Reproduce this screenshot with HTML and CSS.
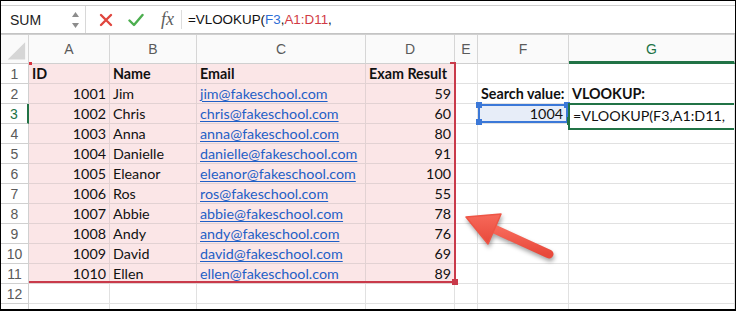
FILE: index.html
```html
<!DOCTYPE html>
<html lang="en">
<head>
    <meta charset="UTF-8">
    <meta name="viewport" content="width=device-width, initial-scale=1.0">
    <title>VLOOKUP</title>
    <link rel="stylesheet" href="styles.css">
</head>
<body>
    <div class="frame">
        <div class="toolbar">
            <div class="namebox">
                <span>SUM</span>
                <svg class="spin" width="9" height="18" viewBox="0 0 9 18">
                    <path d="M1 6 L4.5 1 L8 6 Z" fill="#8c8c8c"/>
                    <path d="M1 12 L4.5 17 L8 12 Z" fill="#8c8c8c"/>
                </svg>
            </div>
            <div class="actions">
                <svg width="14" height="14" viewBox="0 0 14 14">
                    <path d="M2 2 L12 12 M12 2 L2 12" stroke="#e0463e" stroke-width="2.4" stroke-linecap="round"/>
                </svg>
                <svg width="16" height="14" viewBox="0 0 16 14">
                    <path d="M1.5 7.5 L6 12 L14.5 2" stroke="#4cae4f" stroke-width="2.4" fill="none" stroke-linecap="round" stroke-linejoin="round"/>
                </svg>
                <span class="fx">fx</span>
            </div>
            <div class="formula">=VLOOKUP(<span class="ref-f">F3</span>,<span class="ref-a">A1:D11</span>,</div>
        </div>

        <div class="sheet">
            <div class="corner">
                <svg width="28" height="28" viewBox="0 0 28 28"><path d="M7 25 L25 25 L25 7 Z" fill="#d6d6d6"/></svg>
            </div>
            <div class="colhead">A</div>
            <div class="colhead">B</div>
            <div class="colhead">C</div>
            <div class="colhead">D</div>
            <div class="colhead">E</div>
            <div class="colhead">F</div>
            <div class="colhead active">G</div>

            <div class="rowhead">1</div>
            <div class="cell hl b">ID</div>
            <div class="cell hl b">Name</div>
            <div class="cell hl b">Email</div>
            <div class="cell hl b">Exam Result</div>
            <div class="cell"></div>
            <div class="cell"></div>
            <div class="cell"></div>

            <div class="rowhead">2</div>
            <div class="cell hl num">1001</div>
            <div class="cell hl">Jim</div>
            <div class="cell hl"><span class="link">jim@fakeschool.com</span></div>
            <div class="cell hl num">59</div>
            <div class="cell"></div>
            <div class="cell b">Search value:</div>
            <div class="cell b">VLOOKUP:</div>

            <div class="rowhead active">3</div>
            <div class="cell hl num">1002</div>
            <div class="cell hl">Chris</div>
            <div class="cell hl"><span class="link">chris@fakeschool.com</span></div>
            <div class="cell hl num">60</div>
            <div class="cell"></div>
            <div class="cell num sel">
                1004
                <span class="knob tl"></span>
                <span class="knob tr"></span>
                <span class="knob bl"></span>
                <span class="knob br"></span>
            </div>
            <div class="cell edit-host">
                <div class="editor">=VLOOKUP(F3,A1:D11,</div>
            </div>

            <div class="rowhead">4</div>
            <div class="cell hl num">1003</div>
            <div class="cell hl">Anna</div>
            <div class="cell hl"><span class="link">anna@fakeschool.com</span></div>
            <div class="cell hl num">80</div>
            <div class="cell"></div>
            <div class="cell"></div>
            <div class="cell"></div>

            <div class="rowhead">5</div>
            <div class="cell hl num">1004</div>
            <div class="cell hl">Danielle</div>
            <div class="cell hl"><span class="link">danielle@fakeschool.com</span></div>
            <div class="cell hl num">91</div>
            <div class="cell"></div>
            <div class="cell"></div>
            <div class="cell"></div>

            <div class="rowhead">6</div>
            <div class="cell hl num">1005</div>
            <div class="cell hl">Eleanor</div>
            <div class="cell hl"><span class="link">eleanor@fakeschool.com</span></div>
            <div class="cell hl num">100</div>
            <div class="cell"></div>
            <div class="cell"></div>
            <div class="cell"></div>

            <div class="rowhead">7</div>
            <div class="cell hl num">1006</div>
            <div class="cell hl">Ros</div>
            <div class="cell hl"><span class="link">ros@fakeschool.com</span></div>
            <div class="cell hl num">55</div>
            <div class="cell"></div>
            <div class="cell"></div>
            <div class="cell"></div>

            <div class="rowhead">8</div>
            <div class="cell hl num">1007</div>
            <div class="cell hl">Abbie</div>
            <div class="cell hl"><span class="link">abbie@fakeschool.com</span></div>
            <div class="cell hl num">78</div>
            <div class="cell"></div>
            <div class="cell"></div>
            <div class="cell"></div>

            <div class="rowhead">9</div>
            <div class="cell hl num">1008</div>
            <div class="cell hl">Andy</div>
            <div class="cell hl"><span class="link">andy@fakeschool.com</span></div>
            <div class="cell hl num">76</div>
            <div class="cell"></div>
            <div class="cell"></div>
            <div class="cell"></div>

            <div class="rowhead">10</div>
            <div class="cell hl num">1009</div>
            <div class="cell hl">David</div>
            <div class="cell hl"><span class="link">david@fakeschool.com</span></div>
            <div class="cell hl num">69</div>
            <div class="cell"></div>
            <div class="cell"></div>
            <div class="cell"></div>

            <div class="rowhead">11</div>
            <div class="cell hl num">1010</div>
            <div class="cell hl">Ellen</div>
            <div class="cell hl"><span class="link">ellen@fakeschool.com</span></div>
            <div class="cell hl num">89</div>
            <div class="cell"></div>
            <div class="cell"></div>
            <div class="cell"></div>

            <div class="rowhead">12</div>
            <div class="cell"></div>
            <div class="cell"></div>
            <div class="cell"></div>
            <div class="cell"></div>
            <div class="cell"></div>
            <div class="cell"></div>
            <div class="cell"></div>

            <div class="rowhead">13</div>
            <div class="cell"></div>
            <div class="cell"></div>
            <div class="cell"></div>
            <div class="cell"></div>
            <div class="cell"></div>
            <div class="cell"></div>
            <div class="cell"></div>
        </div>

        <!-- reference range A1:D11 -->
        <div class="range">
            <span class="tick-tl"></span>
            <span class="tick-tr"></span>
            <span class="handle"></span>
        </div>

        <svg class="arrow" width="200" height="100" viewBox="0 0 200 100">
            <defs>
                <linearGradient id="ag" x1="0" y1="0" x2="0" y2="1">
                    <stop offset="0" stop-color="#f7695a"/>
                    <stop offset="1" stop-color="#e8493b"/>
                </linearGradient>
            </defs>
            <line x1="92" y1="48" x2="149" y2="74" stroke="url(#ag)" stroke-width="9" stroke-linecap="round"/>
            <path d="M66 37 L101 34 L88 64 Z" fill="url(#ag)" stroke="#ee5545" stroke-width="1.5" stroke-linejoin="round"/>
        </svg>
    </div>
</body>
</html>
```

FILE: styles.css
```css
body {
    margin: 0;
    background-color: #ffffff;
}

.frame {
    position: relative;
    width: 736px;
    height: 311px;
    box-sizing: border-box;
    border: 1px solid #000;
    border-bottom-width: 2px;
    overflow: hidden;
    background-color: #fff;
}

/* formula bar */

.toolbar {
    display: flex;
    align-items: center;
    height: 27px;
    margin-top: 4px;
    border-top: 1px solid #cfcfcf;
    border-bottom: 1px solid #c4c4c4;
    font-family: "Liberation Sans", Arial, sans-serif;
    font-size: 14px;
    color: #222;
}

.namebox {
    display: flex;
    align-items: center;
    justify-content: space-between;
    width: 85px;
    height: 100%;
    box-sizing: border-box;
    padding: 0 5px 0 9px;
    border-right: 1px solid #d8d8d8;
}

.actions {
    display: flex;
    align-items: center;
    gap: 15px;
    height: 19px;
    padding: 0 7px 0 13px;
    border-right: 1px solid #dddddd;
}

.fx {
    font-family: "Liberation Serif", serif;
    font-style: italic;
    font-size: 18px;
    color: #5c5c5c;
    margin-left: 2px;
}

.formula {
    padding-left: 6px;
    font-family: "Liberation Sans Narrow", "Liberation Sans", sans-serif;
    font-size: 13.4px;
    color: #111;
}

.ref-f {
    color: #2f6fd6;
}

.ref-a {
    color: #d13a45;
}

/* grid */

.sheet {
    display: grid;
    grid-template-columns: 28px 81px 87px 169px 89px 23px 91px 1fr;
    grid-template-rows: 29px;
    grid-auto-rows: 20px;
    border-top: 1px solid #d0d0d0;
    font-family: Lato, sans-serif;
    font-size: 14.3px;
    color: #111;
}

.corner,
.colhead,
.rowhead {
    background-color: #fafafa;
    color: #5a5a5a;
    font-family: "Liberation Sans", Arial, sans-serif;
    font-size: 14px;
    display: flex;
    align-items: center;
    justify-content: center;
    border-right: 1px solid #d6d6d6;
    border-bottom: 1px solid #d0d0d0;
    box-sizing: border-box;
}

.corner {
    align-items: flex-end;
    justify-content: flex-end;
}

.colhead.active {
    color: #217346;
    border-bottom: 3px solid #217346;
    padding-top: 2px;
}

.rowhead {
    background-color: #fff;
    border-right-color: #d0d0d0;
}

.rowhead.active {
    color: #217346;
    border-right: 2px solid #217346;
}

.cell {
    box-sizing: border-box;
    border-right: 1px solid #e1e1e1;
    border-bottom: 1px solid #e1e1e1;
    padding: 0 3px;
    line-height: 19px;
    white-space: nowrap;
    overflow: visible;
}

.cell.hl {
    background-color: #fbe6e7;
    border-color: #e2d2d3;
}

.cell.b {
    font-weight: bold;
}

.cell.num {
    text-align: right;
}

.link {
    color: #1f5fc6;
    text-decoration: underline;
    text-underline-offset: 2px;
}

.cell.sel {
    position: relative;
    background-color: #e7edf8;
    box-shadow: inset 0 0 0 2px #3b78d8;
    padding-right: 5px;
}

.knob {
    position: absolute;
    width: 6px;
    height: 6px;
    background-color: #3b78d8;
}

.knob.tl { left: -2px; top: -2px; }
.knob.tr { right: -2px; top: -2px; }
.knob.bl { left: -2px; bottom: -2px; }
.knob.br { right: -2px; bottom: -2px; background-color: #217346; width: 3px; height: 8px; }

.edit-host {
    position: relative;
}

.editor {
    position: absolute;
    left: -1px;
    right: 0;
    top: -1px;
    height: 27px;
    box-sizing: border-box;
    border: 2px solid #217346;
    border-right: none;
    background-color: #fff;
    padding: 0 4px 0 3px;
    line-height: 21px;
}

/* overlays */

.range {
    position: absolute;
    left: 28px;
    top: 61px;
    width: 427px;
    height: 221px;
    box-sizing: border-box;
    border-right: 2px solid #c93a4a;
    border-bottom: 2px solid #c93a4a;
    pointer-events: none;
}

.tick-tl {
    position: absolute;
    left: 0;
    top: 0;
    width: 3px;
    height: 3px;
    background-color: #d7333f;
}

.tick-tr {
    position: absolute;
    right: -2px;
    top: 0;
    width: 6px;
    height: 2px;
    background-color: #c93a4a;
}

.handle {
    position: absolute;
    right: -4px;
    bottom: -4px;
    width: 6px;
    height: 6px;
    background-color: #c93a4a;
}

.arrow {
    position: absolute;
    left: 399px;
    top: 179px;
    filter: drop-shadow(1px 3px 2px rgba(0, 0, 0, 0.35));
}
```
